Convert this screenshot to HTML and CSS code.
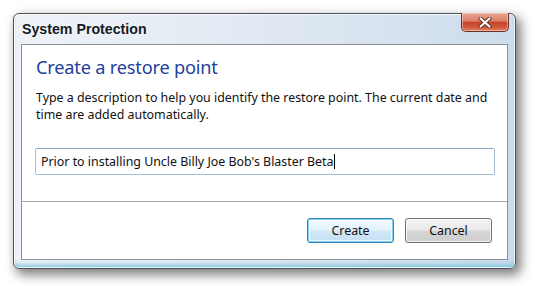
FILE: index.html
```html
<!DOCTYPE html>
<html lang="en">
<head>
    <meta charset="UTF-8">
    <title>System Protection</title>
    <link rel="stylesheet" href="styles.css">
</head>
<body>
    <div class="window">
        <div class="titlebar">
            <span class="title">System Protection</span>
            <button class="close" title="Close">
                <svg width="14" height="11" viewBox="0 0 14 11">
                    <path d="M2.5 1.5 L11.5 9.5 M11.5 1.5 L2.5 9.5" stroke="#5b2a22" stroke-width="4" stroke-linecap="round"/>
                    <path d="M2.5 1.5 L11.5 9.5 M11.5 1.5 L2.5 9.5" stroke="#fff" stroke-width="2.2" stroke-linecap="round"/>
                </svg>
            </button>
        </div>
        <div class="client">
            <div class="content">
                <h1>Create a restore point</h1>
                <p>Type a description to help you identify the restore point. The current date and time are added automatically.</p>
                <div class="field">Prior to installing Uncle Billy Joe Bob's Blaster Beta<span class="caret"></span></div>
            </div>
            <div class="buttons">
                <button class="btn default">Create</button>
                <button class="btn">Cancel</button>
            </div>
        </div>
    </div>
</body>
</html>
```

FILE: styles.css
```css
body {
    margin: 0;
    padding: 13px 0 0 13px;
    background: #fff;
    font-family: 'Noto Sans', 'Open Sans', sans-serif;
    height: 286px;
    box-sizing: border-box;
    overflow: hidden;
}
.window {
    width: 503px;
    height: 256px;
    box-sizing: border-box;
    border: 1px solid #4e5256;
    border-radius: 6px;
    background: linear-gradient(90deg, #eef2f7 0%, #e2eaf3 45%, #cddcec 100%);
    box-shadow: 4px 5px 11px 1px rgba(0, 0, 0, 0.5), inset 0 0 0 1px rgba(255, 255, 255, 0.8), inset 0 -5px 5px -2px #78c3dc;
    display: flex;
    flex-direction: column;
}
.titlebar {
    height: 30px;
    display: flex;
    justify-content: space-between;
    align-items: flex-start;
    padding: 0 6px 0 8px;
}
.title {
    font-family: 'Liberation Sans', Arial, sans-serif;
    font-weight: bold;
    font-size: 14.2px;
    color: #151b24;
    margin-top: 7px;
    text-shadow: 0 0 6px #fff;
}
.close {
    width: 48px;
    height: 19px;
    margin-top: -1px;
    border: 1px solid #6b3228;
    border-top: none;
    border-radius: 0 0 5px 5px;
    background: linear-gradient(180deg, #e9a896 0%, #dc7d66 45%, #c4452c 52%, #cf5a3c 80%, #e0866a 100%);
    box-shadow: inset 0 0 0 1px rgba(255, 220, 210, 0.5);
    padding: 0;
    display: flex;
    align-items: center;
    justify-content: center;
}
.client {
    flex: 1;
    margin: 0 7px 8px 7px;
    border: 1px solid #8c9096;
    background: #fff;
    display: flex;
    flex-direction: column;
}
.content {
    padding: 10px 12px 0 14px;
    height: 146px;
    border-bottom: 1px solid #a9a9a9;
}
h1 {
    margin: 0;
    font-weight: normal;
    font-size: 18.2px;
    color: #1e3f9a;
    letter-spacing: -0.2px;
}
p {
    margin: 10px 0 0;
    font-size: 12.4px;
    line-height: 17px;
    color: #111;
}
.field {
    margin: 25px 0 0 -1px;
    width: 460px;
    height: 27px;
    box-sizing: border-box;
    border: 1px solid #a6bdd6;
    border-top-color: #8ea6c3;
    border-radius: 2px;
    font-size: 12.4px;
    color: #111;
    padding: 4px 0 0 5px;
}
.caret {
    display: inline-block;
    width: 1px;
    height: 15px;
    background: #000;
    vertical-align: -3px;
}
.buttons {
    display: flex;
    justify-content: flex-end;
    gap: 11px;
    padding: 16px 15px 0 0;
}
.btn {
    width: 87px;
    height: 25px;
    border: 1px solid #707070;
    border-radius: 3px;
    background: linear-gradient(180deg, #f4f4f4 0%, #e8e8e8 48%, #d6d6d6 52%, #cdcdcd 100%);
    box-shadow: inset 0 0 0 1px rgba(255, 255, 255, 0.8);
    font-family: 'Noto Sans', 'Open Sans', sans-serif;
    font-size: 12.4px;
    color: #111;
    padding: 0;
}
.btn.default {
    border-color: #3c7fb1;
    background: linear-gradient(180deg, #f2f9fd 0%, #e4f2fb 48%, #d2e8f6 52%, #c4e0f2 100%);
    box-shadow: inset 0 0 0 1px #7fd3f2, inset 0 0 0 2px rgba(255, 255, 255, 0.7);
}
```
